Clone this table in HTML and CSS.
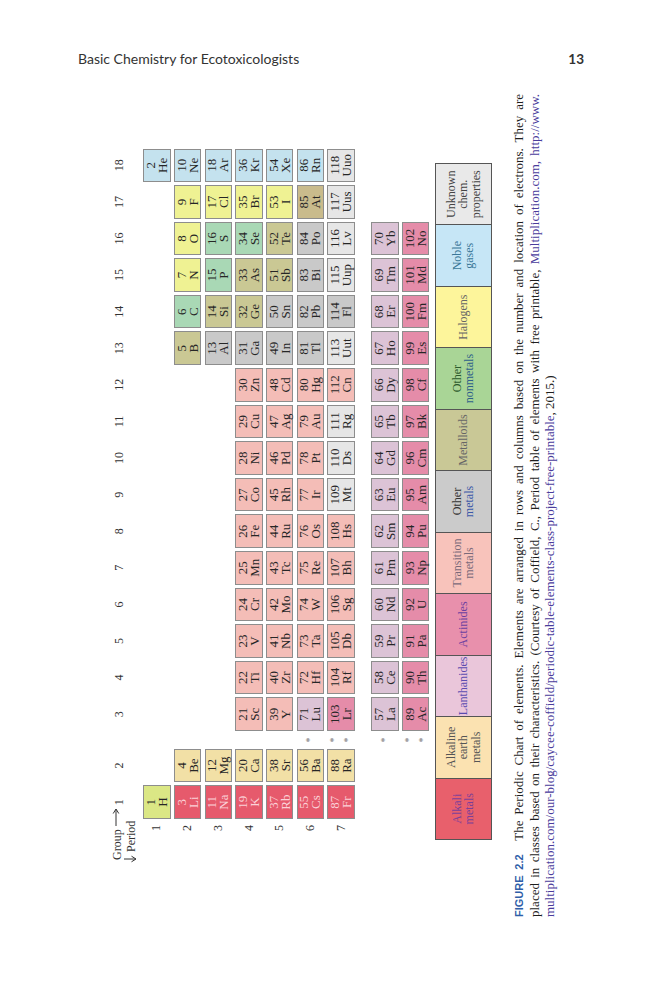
FILE: index.html
```html
<!DOCTYPE html>
<html lang="en">
<head>
<meta charset="utf-8">
<title>Basic Chemistry for Ecotoxicologists – 13</title>
<link rel="stylesheet" href="styles.css">
</head>
<body>
<header class="running-head">
  <span class="title">Basic Chemistry for Ecotoxicologists</span>
  <span class="folio">13</span>
</header>

<div class="figure-frame">
  <figure class="figure">
    <div class="ptable">
      <!-- group labels -->
      <div class="corner">
        <div class="corner-group">Group <svg class="arr-r" width="18" height="8" viewBox="0 0 18 8"><path d="M0 4H16.5M12.5 1.2L17 4L12.5 6.8" fill="none" stroke="#333" stroke-width="1"/></svg></div>
        <div class="corner-period"><svg class="arr-d" width="8" height="12" viewBox="0 0 8 12"><path d="M4 0V11.5M1.2 7.5L4 12L6.8 7.5" fill="none" stroke="#333" stroke-width="1"/></svg>Period</div>
      </div>
      <div class="glabel">1</div><div class="glabel">2</div><div></div>
      <div class="glabel">3</div><div class="glabel">4</div><div class="glabel">5</div><div class="glabel">6</div>
      <div class="glabel">7</div><div class="glabel">8</div><div class="glabel">9</div><div class="glabel">10</div>
      <div class="glabel">11</div><div class="glabel">12</div><div class="glabel">13</div><div class="glabel">14</div>
      <div class="glabel">15</div><div class="glabel">16</div><div class="glabel">17</div><div class="glabel">18</div>

      <!-- period 1 -->
      <div class="plabel">1</div>
      <div class="el h"><span>1</span>H</div>
      <div></div><div></div>
      <div></div><div></div><div></div><div></div><div></div><div></div><div></div><div></div>
      <div></div><div></div><div></div><div></div><div></div><div></div><div></div>
      <div class="el ng"><span>2</span>He</div>

      <!-- period 2 -->
      <div class="plabel">2</div>
      <div class="el alk"><span>3</span>Li</div>
      <div class="el ae"><span>4</span>Be</div>
      <div></div>
      <div></div><div></div><div></div><div></div><div></div><div></div><div></div><div></div><div></div><div></div>
      <div class="el md"><span>5</span>B</div>
      <div class="el nm"><span>6</span>C</div>
      <div class="el hal"><span>7</span>N</div>
      <div class="el hal"><span>8</span>O</div>
      <div class="el hal"><span>9</span>F</div>
      <div class="el ng"><span>10</span>Ne</div>

      <!-- period 3 -->
      <div class="plabel">3</div>
      <div class="el alk"><span>11</span>Na</div>
      <div class="el ae"><span>12</span>Mg</div>
      <div></div>
      <div></div><div></div><div></div><div></div><div></div><div></div><div></div><div></div><div></div><div></div>
      <div class="el om"><span>13</span>Al</div>
      <div class="el md"><span>14</span>Si</div>
      <div class="el nm"><span>15</span>P</div>
      <div class="el nm"><span>16</span>S</div>
      <div class="el hal"><span>17</span>Cl</div>
      <div class="el ng"><span>18</span>Ar</div>

      <!-- period 4 -->
      <div class="plabel">4</div>
      <div class="el alk"><span>19</span>K</div>
      <div class="el ae"><span>20</span>Ca</div>
      <div></div>
      <div class="el tm"><span>21</span>Sc</div>
      <div class="el tm"><span>22</span>Ti</div>
      <div class="el tm"><span>23</span>V</div>
      <div class="el tm"><span>24</span>Cr</div>
      <div class="el tm"><span>25</span>Mn</div>
      <div class="el tm"><span>26</span>Fe</div>
      <div class="el tm"><span>27</span>Co</div>
      <div class="el tm"><span>28</span>Ni</div>
      <div class="el tm"><span>29</span>Cu</div>
      <div class="el tm"><span>30</span>Zn</div>
      <div class="el om"><span>31</span>Ga</div>
      <div class="el md"><span>32</span>Ge</div>
      <div class="el md"><span>33</span>As</div>
      <div class="el nm"><span>34</span>Se</div>
      <div class="el hal"><span>35</span>Br</div>
      <div class="el ng"><span>36</span>Kr</div>

      <!-- period 5 -->
      <div class="plabel">5</div>
      <div class="el alk"><span>37</span>Rb</div>
      <div class="el ae"><span>38</span>Sr</div>
      <div></div>
      <div class="el tm"><span>39</span>Y</div>
      <div class="el tm"><span>40</span>Zr</div>
      <div class="el tm"><span>41</span>Nb</div>
      <div class="el tm"><span>42</span>Mo</div>
      <div class="el tm"><span>43</span>Tc</div>
      <div class="el tm"><span>44</span>Ru</div>
      <div class="el tm"><span>45</span>Rh</div>
      <div class="el tm"><span>46</span>Pd</div>
      <div class="el tm"><span>47</span>Ag</div>
      <div class="el tm"><span>48</span>Cd</div>
      <div class="el om"><span>49</span>In</div>
      <div class="el om"><span>50</span>Sn</div>
      <div class="el md"><span>51</span>Sb</div>
      <div class="el md"><span>52</span>Te</div>
      <div class="el hal"><span>53</span>I</div>
      <div class="el ng"><span>54</span>Xe</div>

      <!-- period 6 -->
      <div class="plabel">6</div>
      <div class="el alk"><span>55</span>Cs</div>
      <div class="el ae"><span>56</span>Ba</div>
      <div class="star">*</div>
      <div class="el la"><span>71</span>Lu</div>
      <div class="el tm"><span>72</span>Hf</div>
      <div class="el tm"><span>73</span>Ta</div>
      <div class="el tm"><span>74</span>W</div>
      <div class="el tm"><span>75</span>Re</div>
      <div class="el tm"><span>76</span>Os</div>
      <div class="el tm"><span>77</span>Ir</div>
      <div class="el tm"><span>78</span>Pt</div>
      <div class="el tm"><span>79</span>Au</div>
      <div class="el tm"><span>80</span>Hg</div>
      <div class="el om"><span>81</span>Tl</div>
      <div class="el om"><span>82</span>Pb</div>
      <div class="el om"><span>83</span>Bi</div>
      <div class="el om"><span>84</span>Po</div>
      <div class="el md2"><span>85</span>At</div>
      <div class="el ng"><span>86</span>Rn</div>

      <!-- period 7 -->
      <div class="plabel">7</div>
      <div class="el alk"><span>87</span>Fr</div>
      <div class="el ae"><span>88</span>Ra</div>
      <div class="star">*<br>*</div>
      <div class="el ac"><span>103</span>Lr</div>
      <div class="el tm"><span>104</span>Rf</div>
      <div class="el tm"><span>105</span>Db</div>
      <div class="el tm"><span>106</span>Sg</div>
      <div class="el tm"><span>107</span>Bh</div>
      <div class="el tm"><span>108</span>Hs</div>
      <div class="el uk"><span>109</span>Mt</div>
      <div class="el uk"><span>110</span>Ds</div>
      <div class="el uk"><span>111</span>Rg</div>
      <div class="el tm"><span>112</span>Cn</div>
      <div class="el uk"><span>113</span>Uut</div>
      <div class="el om"><span>114</span>Fl</div>
      <div class="el uk"><span>115</span>Uup</div>
      <div class="el uk"><span>116</span>Lv</div>
      <div class="el uk"><span>117</span>Uus</div>
      <div class="el uk"><span>118</span>Uuo</div>

      <div class="gap-row"></div>

      <!-- lanthanides -->
      <div class="star series">*</div>
      <div class="el la"><span>57</span>La</div>
      <div class="el la"><span>58</span>Ce</div>
      <div class="el la"><span>59</span>Pr</div>
      <div class="el la"><span>60</span>Nd</div>
      <div class="el la"><span>61</span>Pm</div>
      <div class="el la"><span>62</span>Sm</div>
      <div class="el la"><span>63</span>Eu</div>
      <div class="el la"><span>64</span>Gd</div>
      <div class="el la"><span>65</span>Tb</div>
      <div class="el la"><span>66</span>Dy</div>
      <div class="el la"><span>67</span>Ho</div>
      <div class="el la"><span>68</span>Er</div>
      <div class="el la"><span>69</span>Tm</div>
      <div class="el la"><span>70</span>Yb</div>

      <!-- actinides -->
      <div class="star series">*<br>*</div>
      <div class="el ac"><span>89</span>Ac</div>
      <div class="el ac"><span>90</span>Th</div>
      <div class="el ac"><span>91</span>Pa</div>
      <div class="el ac"><span>92</span>U</div>
      <div class="el ac"><span>93</span>Np</div>
      <div class="el ac"><span>94</span>Pu</div>
      <div class="el ac"><span>95</span>Am</div>
      <div class="el ac"><span>96</span>Cm</div>
      <div class="el ac"><span>97</span>Bk</div>
      <div class="el ac"><span>98</span>Cf</div>
      <div class="el ac"><span>99</span>Es</div>
      <div class="el ac"><span>100</span>Fm</div>
      <div class="el ac"><span>101</span>Md</div>
      <div class="el ac"><span>102</span>No</div>
    </div>

    <div class="legend">
      <div class="lg-alk"><span>Alkali<br>metals</span></div>
      <div class="lg-ae"><span>Alkaline<br>earth<br>metals</span></div>
      <div class="lg-la"><span>Lanthanides</span></div>
      <div class="lg-ac"><span>Actinides</span></div>
      <div class="lg-tm"><span>Transition<br>metals</span></div>
      <div class="lg-om"><span><span class="dk">Other</span><br>metals</span></div>
      <div class="lg-md"><span>Metalloids</span></div>
      <div class="lg-nm"><span><span class="dk">Other</span><br>nonmetals</span></div>
      <div class="lg-hal"><span>Halogens</span></div>
      <div class="lg-ng"><span>Noble<br>gases</span></div>
      <div class="lg-uk"><span>Unknown<br>chem.<br>properties</span></div>
    </div>

    <figcaption class="caption">
      <div class="cap-line"><span class="fig-no">FIGURE 2.2</span> The Periodic Chart of elements. Elements are arranged in rows and columns based on the number and location of electrons. They are</div>
      <div class="cap-line">placed in classes based on their characteristics. (Courtesy of Coffield, C., Period table of elements with free printable, <span class="link">Multiplication.com, http://www.</span></div>
      <div class="cap-line last"><span class="link">multiplication.com/our-blog/caycee-coffield/periodic-table-elements-class-project-free-printable</span>, 2015.)</div>
    </figcaption>
  </figure>
</div>
</body>
</html>
```

FILE: styles.css
```css
* { box-sizing: border-box; }

html, body {
  margin: 0;
  padding: 0;
  background: #ffffff;
}

body {
  width: 662px;
  height: 1000px;
  overflow: hidden;
  font-family: "Liberation Serif", "Times New Roman", serif;
  color: #222;
}

/* running head */
.running-head {
  display: flex;
  justify-content: space-between;
  align-items: center;
  height: 67px;
  padding: 51px 78px 0 78px;
  line-height: 16px;
  font-family: Lato, "Open Sans", "Liberation Sans", sans-serif;
  font-size: 14px;
  color: #333;
}
.running-head .folio { font-weight: 700; font-size: 13.5px; }

/* rotated (landscape) figure */
.figure-frame {
  margin: 23px 0 0 95px;
  width: 470px;
  height: 830px;
}
.figure {
  margin: 0;
  width: 830px;
  height: 470px;
  transform-origin: 0 0;
  transform: translateY(830px) rotate(-90deg);
}

/* periodic table grid */
.ptable {
  display: grid;
  margin-left: 55px;
  width: max-content;
  grid-template-columns: 43px 33.5px 33.5px 11.7px repeat(16, 33.5px);
  grid-template-rows: 45px repeat(7, 27.5px) 10px repeat(2, 27.5px);
  column-gap: 3.1px;
  row-gap: 3.2px;
}

.corner {
  grid-column: 1;
  padding: 16px 0 0 2px;
  font-size: 12px;
  line-height: 13px;
  white-space: nowrap;
  color: #333;
}
.corner-group { padding-left: 3px; }
.corner-group .arr-r { vertical-align: 1px; }
.corner-period .arr-d { vertical-align: -1px; margin-right: 3px; }

.glabel {
  display: flex;
  align-items: center;
  justify-content: center;
  padding-top: 3px;
  font-size: 12px;
  color: #333;
}

.plabel {
  grid-column: 1;
  display: flex;
  align-items: center;
  justify-content: flex-end;
  padding-right: 3px;
  font-size: 12px;
  color: #333;
}

.el {
  display: flex;
  flex-direction: column;
  align-items: center;
  justify-content: center;
  border: 1px solid #8d8d8d;
  font-size: 13px;
  line-height: 12px;
  color: #262626;
  white-space: nowrap;
}
.el span { display: block; }

.star {
  display: flex;
  align-items: center;
  justify-content: center;
  text-align: center;
  font-size: 10px;
  line-height: 14px;
  color: #7a7a7a;
}
.star.series { grid-column: 4; }

.gap-row { grid-column: 1 / -1; }

/* element categories */
.h   { background: #dbe785; }
.alk { background: #e65a6c; color: #fbd2d8; }
.ae  { background: #f2e0a6; }
.tm  { background: #f4bdb7; }
.la  { background: #dcc3d6; }
.ac  { background: #e58ca9; }
.om  { background: #c9c9c9; }
.md  { background: #cac894; }
.md2 { background: #c9bb8c; }
.nm  { background: #a9d8b5; }
.hal { background: #eff293; }
.ng  { background: #c4e2ee; }
.uk  { background: #e6e6e6; }

/* legend */
.legend {
  display: flex;
  margin: 5.5px 0 0 80px;
  width: 677px;
  height: 57px;
  border: 1.5px solid #555;
}
.legend > div {
  flex: 1;
  display: flex;
  align-items: center;
  justify-content: center;
  text-align: center;
  border-right: 1.5px solid #555;
  font-size: 12px;
  line-height: 12.5px;
  color: #555;
  white-space: nowrap;
}
.legend > div:last-child { border-right: none; }
.legend .dk { color: #333; }

.lg-alk { background: #e8606c; color: #7b3f99 !important; }
.lg-ae  { background: #fbe2b1; }
.lg-la  { background: #eac6da; color: #5b4bb0 !important; }
.lg-ac  { background: #e890ac; color: #6a3fa0 !important; }
.lg-tm  { background: #f8c3bb; color: #7a6a7a !important; }
.lg-om  { background: #cbcbcb; color: #3b58a8 !important; }
.lg-md  { background: #c9c896; color: #666 !important; }
.lg-nm  { background: #a9d596; color: #2f5f8a !important; }
.lg-nm .dk { color: #2c5a2c; }
.lg-hal { background: #fdf59b; color: #666 !important; }
.lg-ng  { background: #c6e6f6; color: #3a7898 !important; }
.lg-uk  { background: #e9e9e9; color: #444 !important; }

/* caption */
.caption {
  margin: 19px 0 0 3px;
  width: 823px;
  font-size: 13px;
  line-height: 15px;
  color: #1e1e1e;
}
.cap-line {
  text-align: justify;
  text-align-last: justify;
}
.cap-line.last {
  text-align: left;
  text-align-last: left;
}
.fig-no {
  font-family: "Liberation Sans", Arial, sans-serif;
  font-weight: 700;
  font-size: 11px;
  color: #2f5ea8;
  margin-right: 8px;
}
.link { color: #4a3c9c; }
```
